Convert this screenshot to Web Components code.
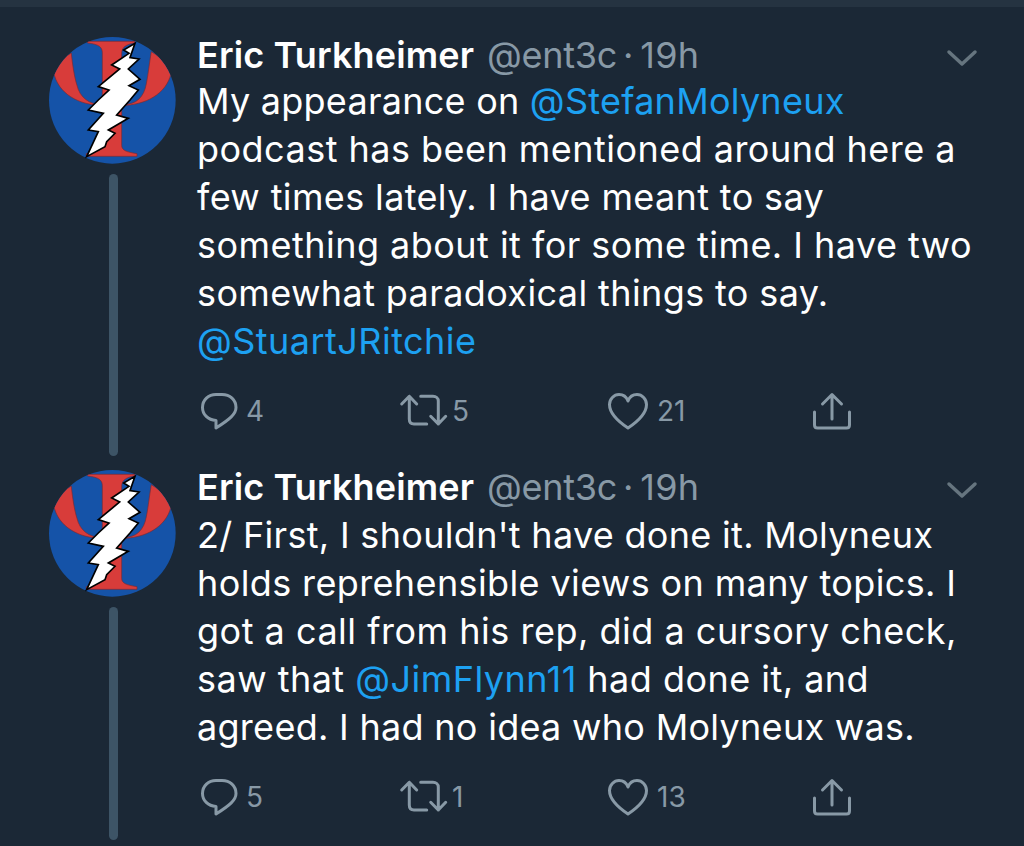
<!DOCTYPE html>
<html>
<head>
<meta charset="utf-8">
<style>
  html, body { margin: 0; background: #1b2836; }
  body { width: 1024px; height: 846px; overflow: hidden; font-family: Inter, "Noto Sans", sans-serif; }
  .topbar { height: 7px; background: #253341; }
  tweet-post a { color: #1da1f2; }
</style>
</head>
<body>
<div class="topbar"></div>

<template id="avatar-tpl">
  <style>
    :host { display: block; width: 128px; height: 128px; }
    svg { display: block; }
  </style>
  <svg width="128" height="128" viewBox="0 0 384 384">
    <clipPath id="disc"><circle cx="190" cy="190" r="190"/></clipPath>
    <circle cx="190" cy="190" r="190" fill="#1553a8"/>
    <g clip-path="url(#disc)">
      <path fill="#d83c3a" stroke="#7d2a30" stroke-width="2" d="M115 13H258L256 18C232 22 219 30 218 48V202C262 205 285 180 292 140C298 110 302 70 307 44C340 64 362 88 366 110C352 170 290 205 218 205V325C218 340 232 345 264 350V358H112V350C145 345 160 340 160 325V205C90 205 26 170 14 105C22 84 40 64 67 48C70 80 76 120 84 145C92 180 120 204 160 202V48C160 30 150 22 116 18Z"/>
    </g>
    <path fill="#fff" stroke="#000" stroke-width="5" d="M258 19L243 62L270 66L238 96L273 127L240 146L268 159L243 189L203 234L238 244L178 279L198 289L173 314L168 329L113 359L148 284L118 279L163 229L118 219L148 189L180 159L148 149L212 96L188 84L240 49L224 39Z"/>
  </svg>
</template>

<template id="stat-tpl">
  <style>
    :host { display: inline-flex; align-items: center; color: #8899a6; font-size: 28px; }
    svg { display: block; overflow: visible; fill: none; stroke: #8899a6; stroke-width: 3; stroke-linecap: round; stroke-linejoin: round; }
    span { margin-left: var(--count-gap, 9px); }
  </style>
  <svg id="icon"></svg>
  <span><slot></slot></span>
</template>

<template id="post-tpl">
  <style>
    :host { display: grid; grid-template-columns: 128px 1fr; column-gap: 20px; padding-left: 49px; color: #fff; }
    .side { display: flex; flex-direction: column; align-items: center; padding-top: var(--avatar-top, 30px); }
    .thread { flex: 1; width: 9px; margin-top: 9px; border-radius: 5px; background: #3d5466; }
    .main { min-width: 0; padding-top: var(--head-top, 7px); }
    .head { display: flex; align-items: center; height: 48px; font-size: 36px; white-space: nowrap; }
    .name { font-weight: 600; letter-spacing: 0.13px; }
    .handle { color: #8899a6; margin-left: 13px; letter-spacing: -0.3px; }
    .dot { color: #8899a6; margin: 0 7px 0 6px; }
    .time { color: #8899a6; letter-spacing: 0.3px; }
    .chev { margin-left: auto; margin-right: 46px; margin-top: 6px; }
    .chev svg { display: block; fill: none; stroke: #66757f; stroke-width: 3.5; stroke-linecap: round; stroke-linejoin: round; }
    .text { font-size: 36px; line-height: 48px; letter-spacing: 0.47px; white-space: nowrap; margin-top: var(--text-shift, 0); }
    .actions { display: grid; grid-template-columns: 199px 208px 205px auto; height: 48px; margin-top: 22px; padding-left: 4px; align-items: center; }
  </style>
  <div class="side">
    <slot name="avatar"></slot>
    <div class="thread"></div>
  </div>
  <div class="main">
    <div class="head">
      <span class="name" id="name"></span>
      <span class="handle" id="handle"></span>
      <span class="dot">&#183;</span>
      <span class="time" id="time"></span>
      <span class="chev"><svg width="32" height="18" viewBox="0 0 32 18"><path d="M3 3L16 15L29 3"/></svg></span>
    </div>
    <div class="text"><slot></slot></div>
    <div class="actions"><slot name="actions"></slot></div>
  </div>
</template>

<script>
const ICONS = {
  reply: [36, 36, 'M15 1.5H21C29 1.5 35 7 35 14.5C35 21 29 26 15 35V27.5C7 27 1.5 21.5 1.5 14.5C1.5 7 7.5 1.5 15 1.5Z'],
  retweet: [48, 34, 'M1.7 10L9.3 2.3L16.7 10M9.3 2.3V25C9.3 28 11 30 14 30H26.7M20.7 2.3H33C36 2.3 38.3 4 38.3 7V30M30.7 22.3L38.3 30L45.7 22.3'],
  like: [40, 36, 'M20 35C8 27 1.5 20 1.5 11.5C1.5 6 6 1.5 11 1.5C15 1.5 18.5 4 20 8C21.5 4 25 1.5 29 1.5C34 1.5 38.5 6 38.5 11.5C38.5 20 32 27 20 35Z'],
  share: [38, 37, 'M9.5 11L19 1.5L28.5 11M19 2V26M1.5 19V32C1.5 34 2.5 35 4.5 35H33.5C35.5 35 36.5 34 36.5 32V19']
};

function tplEl(id) {
  return class extends HTMLElement {
    constructor() {
      super();
      this.attachShadow({mode: 'open'}).appendChild(document.getElementById(id).content.cloneNode(true));
    }
  };
}

customElements.define('psi-avatar', tplEl('avatar-tpl'));

class PostStat extends tplEl('stat-tpl') {
  connectedCallback() {
    const [w, h, d] = ICONS[this.getAttribute('icon')];
    const svg = this.shadowRoot.getElementById('icon');
    svg.setAttribute('width', w);
    svg.setAttribute('height', h);
    svg.setAttribute('viewBox', `0 0 ${w} ${h}`);
    svg.innerHTML = `<path d="${d}"/>`;
  }
}
customElements.define('post-stat', PostStat);

class TweetPost extends tplEl('post-tpl') {
  connectedCallback() {
    const root = this.shadowRoot;
    root.getElementById('name').textContent = this.getAttribute('name');
    root.getElementById('handle').textContent = this.getAttribute('handle');
    root.getElementById('time').textContent = this.getAttribute('time');
  }
}
customElements.define('tweet-post', TweetPost);

function actions(r, t, l) {
  return `<post-stat slot="actions" icon="reply">${r}</post-stat>` +
    `<post-stat slot="actions" icon="retweet" style="--count-gap:4px">${t}</post-stat>` +
    `<post-stat slot="actions" icon="like">${l}</post-stat>` +
    `<post-stat slot="actions" icon="share"></post-stat>`;
}

// line(text, spacing) nudges a line's tracking to land on the reference's line width
const line = (t, ls) => `<span style="letter-spacing:${ls}px">${t}</span>`;

document.currentScript.insertAdjacentHTML('afterend', `
<tweet-post name="Eric Turkheimer" handle="@ent3c" time="19h" style="height:449px;--avatar-top:30px;--head-top:24px;--text-shift:-2px">
  <psi-avatar slot="avatar"></psi-avatar>
  ${line('My appearance on <a>@StefanMolyneux</a>', 0.25)}<br>podcast has been mentioned around here a<br>${line('few times lately. I have meant to say', 0.37)}<br>something about it for some time. I have two<br>${line('somewhat paradoxical things to say.', 0.39)}<br><a>@StuartJRitchie</a>
  ${actions(4, 5, 21)}
</tweet-post>
<tweet-post name="Eric Turkheimer" handle="@ent3c" time="19h" style="height:384px;--avatar-top:14px;--head-top:7px">
  <psi-avatar slot="avatar"></psi-avatar>
  ${line("2/ First, I shouldn't have done it. Molyneux", 0.31)}<br>${line('holds reprehensible views on many topics. I', 0.38)}<br>${line('got a call from his rep, did a cursory check,', 0.51)}<br>saw that <a>@JimFlynn11</a> had done it, and<br>${line('agreed. I had no idea who Molyneux was.', 0.29)}
  ${actions(5, 1, 13)}
</tweet-post>`);
</script>
</body>
</html>
